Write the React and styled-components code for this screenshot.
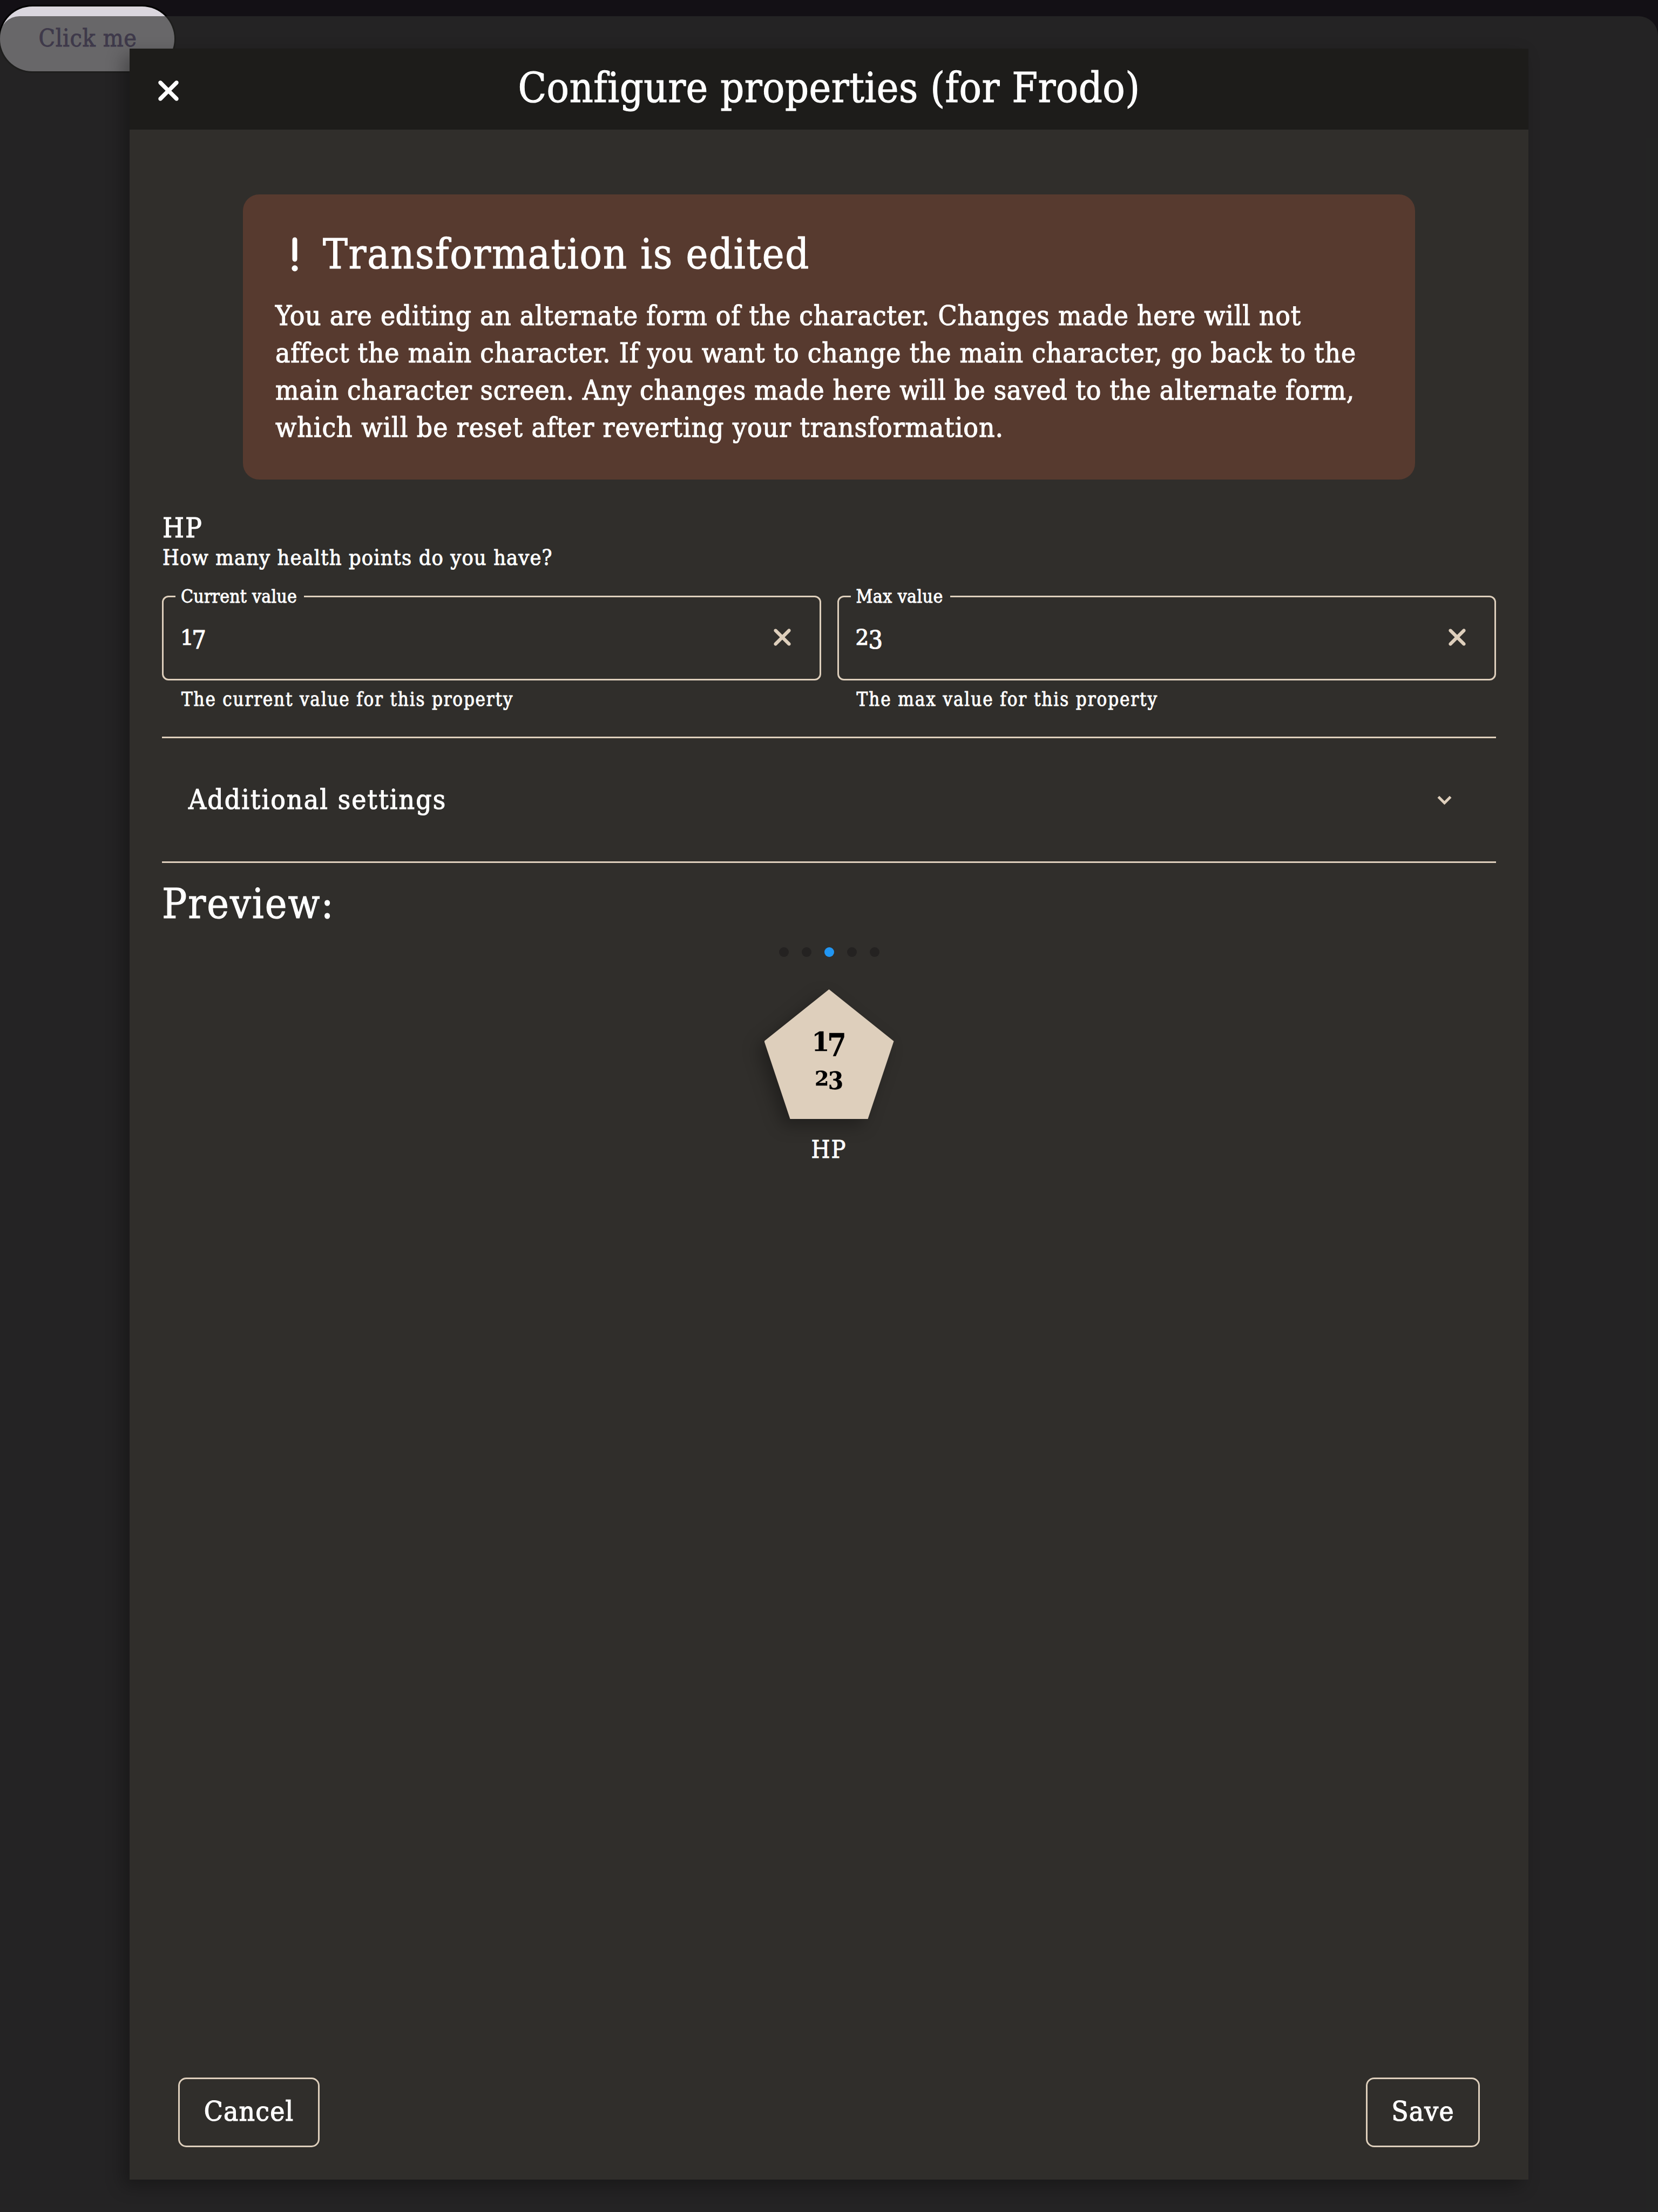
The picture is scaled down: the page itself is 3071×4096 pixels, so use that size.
import React from "react";
import styled, { createGlobalStyle } from "styled-components";
import { FaXmark, FaExclamation } from "react-icons/fa6";

const color = {
  page: "#131015",
  scrim: "rgba(45, 46, 44, 0.66)",
  surface: "#302e2b",
  header: "#1d1c1a",
  warning: "#573a2f",
  accent: "#decfbc",
  dot: "#242221",
  active: "#2196f3",
  text: "#ffffff",
};

const GlobalStyle = createGlobalStyle`
  * { box-sizing: border-box; }
  body {
    margin: 0;
    background: ${color.page};
    color: ${color.text};
    font-family: "DejaVu Serif Condensed", "DejaVu Serif", serif;
  }
  button { font-family: inherit; }
`;

const Page = styled.div`
  position: relative;
  height: 4096px;
  overflow: hidden;
  padding-top: 12px;
`;

const OpenButton = styled.button`
  display: block;
  width: 323px;
  height: 120px;
  padding: 0 0 4px 2px;
  border: 0;
  border-radius: 60px;
  background: #dad6de;
  box-shadow: 0 0 0 3px #000;
  color: #5f5085;
  font-size: 44.5px;
  letter-spacing: 0.6px;
  -webkit-text-stroke: 0.9px currentColor;
`;

const Scrim = styled.div`
  position: absolute;
  inset: 30px 0 0;
  padding: 60px 240px;
  border-radius: 36px 36px 0 0;
  background: ${color.scrim};
`;

const Dialog = styled.section`
  display: flex;
  flex-direction: column;
  height: 3946px;
  background: ${color.surface};
  box-shadow: -12px 12px 30px rgba(0, 0, 0, 0.3);
`;

const DialogHeader = styled.header`
  display: grid;
  grid-template-columns: 1fr auto 1fr;
  align-items: center;
  height: 150px;
  padding: 0 42px;
  background: ${color.header};
`;

const Text = styled.div`
  font-size: ${(p) => p.$size}px;
  line-height: ${(p) => p.$line}px;
  letter-spacing: ${(p) => p.$track || 0}px;
  white-space: nowrap;
  -webkit-text-stroke: ${(p) => (p.$size > 45 ? 1.1 : 0.9)}px currentColor;
`;

const Title = styled(Text)`
  padding-bottom: 4px;
`;

const IconButton = styled.button`
  display: flex;
  justify-self: start;
  margin-top: ${(p) => p.$drop || 0}px;
  padding: 0;
  border: 0;
  background: none;
  color: ${(p) => p.$color};
  font-size: ${(p) => p.$size}px;
`;

const DialogBody = styled.div`
  display: flex;
  flex: 1;
  flex-direction: column;
  padding: 120px 60px 0;
`;

const Alert = styled.div`
  height: 528px;
  margin: 0 150px;
  padding: 66px 60px 0;
  border-radius: 30px;
  background: ${color.warning};
`;

const AlertHeading = styled.div`
  display: flex;
  align-items: center;
  gap: 16px;
  margin-bottom: 34px;
  font-size: 72px;
`;

const PropertyHead = styled.div`
  padding: 60px 0 25px 1px;
`;

const Fields = styled.div`
  display: grid;
  grid-template-columns: 1fr 1fr;
  gap: 30px;
`;

const Fieldset = styled.fieldset`
  min-width: 0;
  height: 177px;
  margin: 0;
  padding: 0 0 0 22px;
  border: 3px solid ${color.accent};
  border-radius: 12px;
`;

const Legend = styled.legend`
  padding: 0 13px 0 10px;
`;

const FieldRow = styled.div`
  display: flex;
  align-items: center;
  justify-content: space-between;
  height: 150px;
  margin-top: -20px;
  padding: 0 44px 0 9px;
`;

const Helper = styled(Text)`
  padding: 14px 0 0 36px;
`;

const NumberText = styled.span`
  font-size: ${(p) => p.$size}px;
  line-height: ${(p) => p.$line}px;
  font-weight: ${(p) => (p.$bold ? 700 : 400)};
  -webkit-text-stroke: ${(p) => (p.$bold ? 0.3 : 1.2)}px currentColor;
`;

const Digit = styled.span`
  margin-left: ${(p) => p.$gap || 0}em;
  font-family: ${(p) => (p.$low ? '"DejaVu Serif Condensed"' : '"DejaVu Serif"')}, serif;
  font-size: ${(p) => (p.$low ? 1.19 : 1)}em;
  line-height: 0;
  vertical-align: ${(p) => (p.$low ? -0.15 : 0)}em;
`;

const Rule = styled.hr`
  width: 100%;
  height: 3px;
  margin: ${(p) => p.$top}px 0 0;
  border: 0;
  background: ${color.accent};
`;

const Expander = styled.div`
  display: flex;
  align-items: center;
  justify-content: space-between;
  height: 228px;
  padding: 0 70px 0 49px;
`;

const PreviewTitle = styled(Text)`
  margin-top: 31px;
`;

const Preview = styled.div`
  display: flex;
  flex-direction: column;
  align-items: center;
`;

const Dots = styled.div`
  display: flex;
  gap: 24px;
  margin: 35px 0 60px;
`;

const Dot = styled.i`
  width: 18px;
  height: 18px;
  border-radius: 50%;
  background: ${(p) => (p.$active ? color.active : color.dot)};
`;

const PentagonShadow = styled.div`
  margin-bottom: 30px;
  filter: drop-shadow(-12px 12px 15px rgba(0, 0, 0, 0.3));
`;

const Pentagon = styled.div`
  display: flex;
  flex-direction: column;
  align-items: center;
  gap: 13px;
  width: 240px;
  height: 240px;
  padding-top: 67px;
  background: ${color.accent};
  clip-path: polygon(50% 0, 100% 40%, 80% 100%, 20% 100%, 0 40%);
  color: #000;
`;

const Footer = styled.footer`
  display: flex;
  justify-content: space-between;
  padding: 0 90px 60px;
`;

const ActionButton = styled.button`
  width: ${(p) => p.$width}px;
  height: 129px;
  padding: 0 0 4px;
  border: 3px solid ${color.accent};
  border-radius: 15px;
  background: none;
  color: ${color.text};
  font-size: 51px;
  letter-spacing: 1.2px;
  -webkit-text-stroke: 1.1px currentColor;
`;

const alertLines = [
  { text: "You are editing an alternate form of the character. Changes made here will not", track: 0.79 },
  { text: "affect the main character. If you want to change the main character, go back to the", track: 0.8 },
  { text: "main character screen. Any changes made here will be saved to the alternate form,", track: 0.68 },
  { text: "which will be reset after reverting your transformation.", track: 0.97 },
];

function ChevronDown() {
  return (
    <svg width="1em" height="1em" viewBox="0 0 24 24" fill="none" stroke="currentColor" strokeWidth="2.3">
      <path d="M6.7 9.2 12 14.5l5.3-5.3" />
    </svg>
  );
}

/* Old-style figures: 3, 4, 5, 7 and 9 hang below the baseline. */
function OldStyleNumber({ value, gap, ...rest }) {
  return (
    <NumberText {...rest}>
      {[...String(value)].map((digit, i) => (
        <Digit key={i} $low={"34579".includes(digit)} $gap={i ? gap : 0}>
          {digit}
        </Digit>
      ))}
    </NumberText>
  );
}

function Field({ label, labelTrack, value, gap, helper, helperTrack }) {
  return (
    <div>
      <Fieldset>
        <Legend>
          <Text $size={33.5} $line={43} $track={labelTrack}>{label}</Text>
        </Legend>
        <FieldRow>
          <OldStyleNumber value={value} gap={gap} $size={39} $line={60} />
          <IconButton $size={50} $color={color.accent} $drop={-2}>
            <FaXmark />
          </IconButton>
        </FieldRow>
      </Fieldset>
      <Helper $size={34.6} $line={43} $track={helperTrack}>{helper}</Helper>
    </div>
  );
}

export default function App() {
  return (
    <Page>
      <GlobalStyle />
      <OpenButton>Click me</OpenButton>
      <Scrim>
        <Dialog>
          <DialogHeader>
            <IconButton $size={60} $color={color.text} $drop={5}>
              <FaXmark />
            </IconButton>
            <Title $size={76.5} $line={90} $track={0.5}>Configure properties (for Frodo)</Title>
          </DialogHeader>
          <DialogBody>
            <Alert>
              <AlertHeading>
                <FaExclamation />
                <Text $size={76.5} $line={90} $track={1.7}>Transformation is edited</Text>
              </AlertHeading>
              {alertLines.map((line) => (
                <Text key={line.text} $size={51} $line={69} $track={line.track}>{line.text}</Text>
              ))}
            </Alert>
            <PropertyHead>
              <Text $size={51} $line={60} $track={2}>HP</Text>
              <Text $size={39.3} $line={50} $track={1.16}>How many health points do you have?</Text>
            </PropertyHead>
            <Fields>
              <Field
                label="Current value"
                labelTrack={0.22}
                value={17}
                gap={-0.08}
                helper="The current value for this property"
                helperTrack={1.82}
              />
              <Field
                label="Max value"
                labelTrack={0.44}
                value={23}
                gap={-0.02}
                helper="The max value for this property"
                helperTrack={1.92}
              />
            </Fields>
            <Rule $top={47} />
            <Expander>
              <Text $size={51} $line={60} $track={2.12}>Additional settings</Text>
              <IconButton $size={51} $color={color.accent}>
                <ChevronDown />
              </IconButton>
            </Expander>
            <Rule $top={0} />
            <PreviewTitle $size={76.5} $line={90} $track={2}>Preview:</PreviewTitle>
            <Preview>
              <Dots>
                {[0, 1, 2, 3, 4].map((i) => (
                  <Dot key={i} $active={i === 2} />
                ))}
              </Dots>
              <PentagonShadow>
                <Pentagon>
                  <OldStyleNumber value={17} gap={-0.08} $size={48} $line={60} $bold />
                  <OldStyleNumber value={23} gap={-0.04} $size={38} $line={50} $bold />
                </Pentagon>
              </PentagonShadow>
              <Text $size={44.5} $line={54} $track={2}>HP</Text>
            </Preview>
          </DialogBody>
          <Footer>
            <ActionButton $width={262}>Cancel</ActionButton>
            <ActionButton $width={211}>Save</ActionButton>
          </Footer>
        </Dialog>
      </Scrim>
    </Page>
  );
}
